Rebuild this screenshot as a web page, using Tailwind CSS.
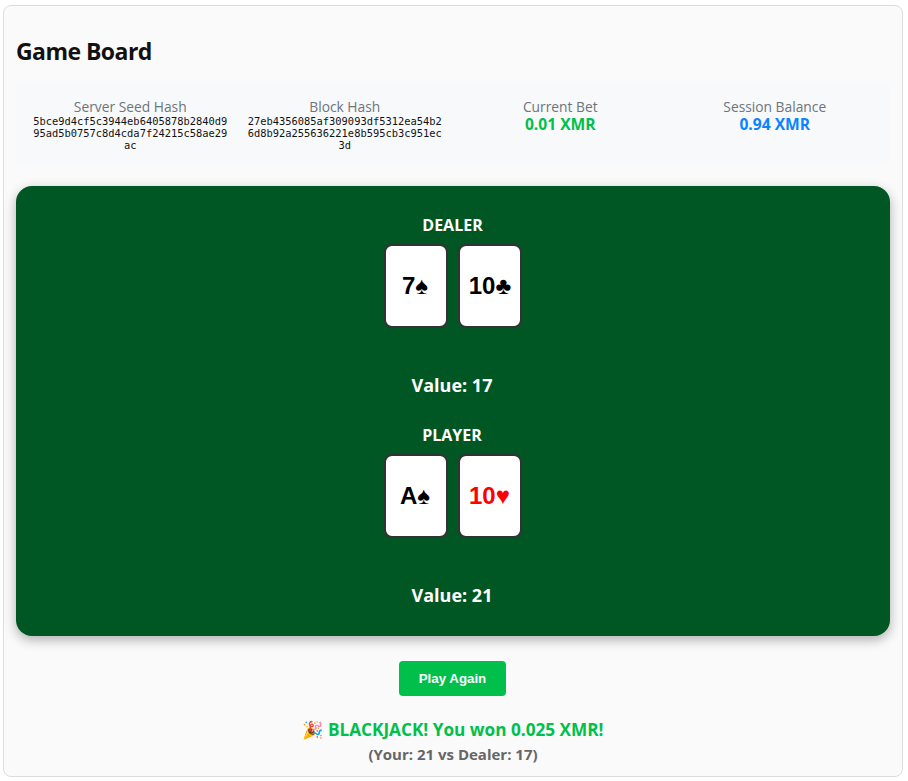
<!DOCTYPE html>
<html lang="en">
  <head>
    <meta charset="UTF-8" />
    <meta name="viewport" content="width=device-width, initial-scale=1.0" />
    <title>Game Board</title>
    <script src="https://cdn.jsdelivr.net/npm/@tailwindcss/browser@4"></script>
  </head>

  <body class="bg-white font-['Open_Sans',sans-serif]">
    <div class="ml-[3px] mt-[5px] h-[772px] w-[900px] rounded-lg border border-[#dddddd] bg-[#fafafa] px-3 pt-[29px]">
      <h2 class="text-[23px] leading-8 font-bold tracking-[-0.55px] text-[#111111]">Game Board</h2>

      <div class="mt-[16px] grid h-[83px] grid-cols-4 gap-4 rounded-lg bg-[#f8f9fa] p-4">
        <div class="pr-[2px] text-center">
          <div class="text-[13.8px] leading-4 text-[#6c757d]">Server Seed Hash</div>
          <div class="font-['DejaVu_Sans_Mono',monospace] text-[10.4px] leading-[12px] break-all text-[#111111]">5bce9d4cf5c3944eb6405878b2840d995ad5b0757c8d4cda7f24215c58ae29ac</div>
        </div>
        <div class="pr-[2px] text-center">
          <div class="text-[13.8px] leading-4 text-[#6c757d]">Block Hash</div>
          <div class="font-['DejaVu_Sans_Mono',monospace] text-[10.4px] leading-[12px] break-all text-[#111111]">27eb4356085af309093df5312ea54b26d8b92a255636221e8b595cb3c951ec3d</div>
        </div>
        <div class="text-center">
          <div class="text-[13.8px] leading-4 text-[#6c757d]">Current Bet</div>
          <div class="text-[15.6px] leading-[19px] font-bold text-[#00c04b]">0.01 XMR</div>
        </div>
        <div class="text-center">
          <div class="text-[13.8px] leading-4 text-[#6c757d]">Session Balance</div>
          <div class="text-[15.6px] leading-[19px] font-bold text-[#0a84ff]">0.94 XMR</div>
        </div>
      </div>

      <div class="mt-[20px] h-[450px] rounded-2xl bg-[#005723] pt-[28px] text-center text-white shadow-[0_4px_12px_rgba(0,0,0,0.3)]">
        <div class="pr-[1px] text-base leading-[22px] font-bold">DEALER</div>
        <div class="mt-[8px] flex justify-center gap-[10px]">
          <div class="flex h-[84px] w-[64px] items-center justify-center rounded-lg border-2 border-[#333333] bg-white pr-[2px] font-['Liberation_Sans',sans-serif] text-2xl font-bold text-black">7♠</div>
          <div class="flex h-[84px] w-[64px] items-center justify-center rounded-lg border-2 border-[#333333] bg-white font-['Liberation_Sans',sans-serif] text-2xl font-bold text-black">10♣</div>
        </div>
        <div class="mt-[45px] pr-[2px] text-lg leading-[24px] font-bold">Value: 17</div>

        <div class="mt-[27px] pr-[2px] text-base leading-[22px] font-bold">PLAYER</div>
        <div class="mt-[8px] flex justify-center gap-[10px]">
          <div class="flex h-[84px] w-[64px] items-center justify-center rounded-lg border-2 border-[#333333] bg-white pr-[2px] font-['Liberation_Sans',sans-serif] text-2xl font-bold text-black">A♠</div>
          <div class="flex h-[84px] w-[64px] items-center justify-center rounded-lg border-2 border-[#333333] bg-white pr-[1px] font-['Liberation_Sans',sans-serif] text-2xl font-bold text-[#ff0000]">10♥</div>
        </div>
        <div class="mt-[45px] pr-[2px] text-lg leading-[24px] font-bold">Value: 21</div>
      </div>

      <div class="mt-[25px] flex justify-center pr-[1px]">
        <button class="h-[35px] w-[107px] rounded bg-[#00c04b] font-['Liberation_Sans',sans-serif] text-[13.3px] font-bold text-white">Play Again</button>
      </div>

      <div class="mt-[22px] text-center text-[17.2px] leading-[24px] font-bold text-[#00c04b]">🎉 BLACKJACK! You won 0.025 XMR!</div>
      <div class="text-center text-[15px] leading-[24px] font-bold text-[#666666]">(Your: 21 vs Dealer: 17)</div>
    </div>
  </body>
</html>
